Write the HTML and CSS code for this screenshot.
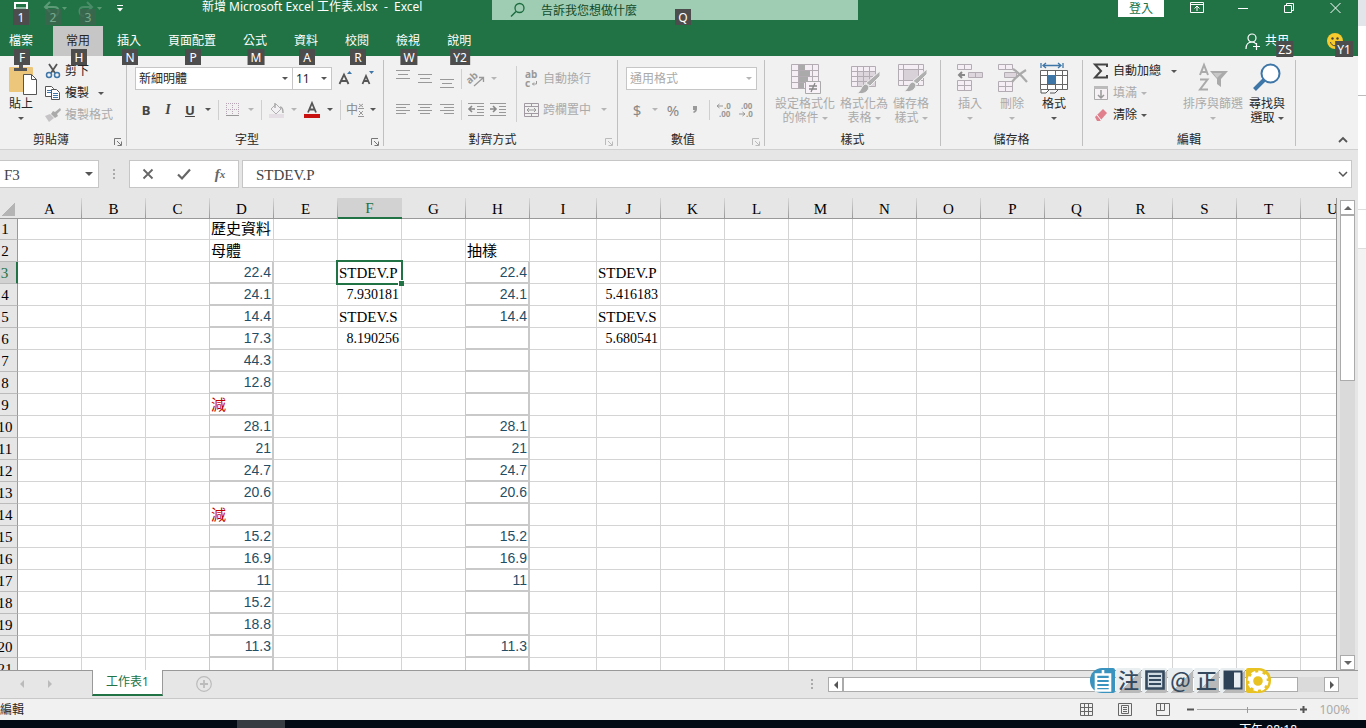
FILE: index.html
```html
<!DOCTYPE html>
<html lang="zh-Hant">
<head>
<meta charset="utf-8">
<title>新增 Microsoft Excel 工作表.xlsx - Excel</title>
<link rel="stylesheet" href="styles.css">
</head>
<body>
<div class="desktop">
<div class="app">
  <header class="titlebar">
    <div class="qat">
      <button class="qat-btn save" aria-label="儲存"><svg width="14" height="8"><path d="M1 8V1h12v7" fill="none" stroke="#fff" stroke-width="2"/><path d="M1 6h12" stroke="#fff"/></svg><span class="tip">1</span></button>
      <button class="qat-btn dim" aria-label="復原"><svg width="24" height="18"><path d="M2 7h9c6 0 6 8 0 9M7 2L2 7l5 5" fill="none" stroke="#5d9b77" stroke-width="2"/><path d="M19 7h5l-2.500 3z" fill="#5d9b77"/></svg><span class="tip">2</span></button>
      <button class="qat-btn dim" aria-label="重做"><svg width="24" height="18"><path d="M14 7H6c-6 0-6 8 0 9M9 2l5 5-5 5" fill="none" stroke="#4a8c67" stroke-width="2"/><path d="M19 7h5l-2.500 3z" fill="#5d9b77"/></svg><span class="tip">3</span></button>
      <button class="qat-more" aria-label="自訂快速存取工具列"><svg width="6" height="7"><path d="M0 .5h6" stroke="#fff"/><path d="M0 3h6L3 6.500z" fill="#fff"/></svg></button>
    </div>
    <div class="doc-title">新增 Microsoft Excel 工作表.xlsx&nbsp; -&nbsp; Excel</div>
    <label class="search"><svg width="16" height="16"><circle cx="9.500" cy="6" r="4.500" fill="none" stroke="#1c6b3f" stroke-width="1.300"/><path d="M6 9.500L1 14.500" stroke="#1c6b3f" stroke-width="1.500"/></svg><input type="text" placeholder="告訴我您想做什麼" aria-label="告訴我您想做什麼"><span class="tip">Q</span></label>
    <div class="spacer"></div>
    <button class="signin">登入</button>
    <button class="win" aria-label="功能區顯示選項"><svg width="14" height="12"><path d="M.5.500h13v10H.5zM.5 2.500h13M7 9V4M4.500 6.500L7 4l2.500 2.500" fill="none" stroke="#fff"/></svg></button>
    <button class="win" aria-label="最小化"><svg width="10" height="12"><path d="M0 6.500h10" stroke="#fff"/></svg></button>
    <button class="win" aria-label="還原"><svg width="10" height="12"><path d="M.5 3.500h7v7h-7zM2.500 3V1.500h7v7H8" fill="none" stroke="#fff"/></svg></button>
    <button class="win" aria-label="關閉"><svg width="11" height="12"><path d="M.5 1l10 10M10.500 1l-10 10" stroke="#fff"/></svg></button>
  </header>

  <nav class="tabs">
    <button class="tab file">檔案<span class="tip">F</span></button>
    <button class="tab active">常用<span class="tip">H</span></button>
    <button class="tab">插入<span class="tip">N</span></button>
    <button class="tab">頁面配置<span class="tip">P</span></button>
    <button class="tab">公式<span class="tip">M</span></button>
    <button class="tab">資料<span class="tip">A</span></button>
    <button class="tab">校閱<span class="tip">R</span></button>
    <button class="tab">檢視<span class="tip">W</span></button>
    <button class="tab">說明<span class="tip">Y2</span></button>
    <div class="spacer"></div>
    <button class="share"><svg width="16" height="17"><circle cx="7" cy="5" r="4" fill="none" stroke="#fff" stroke-width="1.200"/><path d="M1 16c0-4 2-7 6-7 1.500 0 3 .5 4 2M8 13.500h7M11.500 10v7" fill="none" stroke="#fff" stroke-width="1.200"/></svg>共用<span class="tip">ZS</span></button>
    <button class="smile" aria-label="意見反應"><svg width="16" height="16"><circle cx="8" cy="8" r="8" fill="#f7cb2d"/><circle cx="5.500" cy="5.500" r="1.200" fill="#444"/><circle cx="10.500" cy="5.500" r="1.200" fill="#444"/><path d="M3.500 9c1 5 8 5 9 0" fill="none" stroke="#444"/></svg><span class="tip">Y1</span></button>
  </nav>

  <div class="ribbon">
    <section class="group g-clip">
      <div class="body">
        <button class="big paste"><svg width="26" height="34"><path d="M1 5a1 1 0 0 1 1-1h22a1 1 0 0 1 1 1v23a1 1 0 0 1-1 1H2a1 1 0 0 1-1-1z" fill="#ecc77b"/><path d="M6 5h5V1h4v4h4v3H6z" fill="#555"/><path d="M15.500 11.500h8l5 5v15h-13z" fill="#fff" stroke="#555"/><path d="M23.500 11.500v5h5" fill="none" stroke="#555"/></svg><span>貼上</span><i class="ar"></i></button>
        <div class="stack">
          <button class="row"><svg width="16" height="16"><path d="M4 1l6 9M12 1L6 10" stroke="#555" stroke-width="1.800"/><circle cx="4" cy="12" r="2.500" fill="none" stroke="#3e76a8" stroke-width="1.500"/><circle cx="12" cy="12" r="2.500" fill="none" stroke="#3e76a8" stroke-width="1.500"/></svg><span>剪下</span></button>
          <button class="row"><svg width="16" height="16"><path d="M.5 1.500h6l2 2v8h-8z" fill="#fff" stroke="#555"/><path d="M2 5.500h4M2 7.500h4" stroke="#3e76a8"/><path d="M6.500 4.500h5l3 3v7h-8z" fill="#fff" stroke="#555"/><path d="M8 8.500h5M8 10.500h5M8 12.500h5" stroke="#3e76a8"/></svg><span>複製</span><i class="ar"></i></button>
          <button class="row off" disabled><svg width="16" height="16"><path d="M15 1l-5 4-2-1-2 3 4 4 3-2-1-2 4-4z" fill="#aaa"/><path d="M5 7L0 9l4 6 5-4z" fill="#c6c3c6"/></svg><span>複製格式</span></button>
        </div>
      </div>
      <div class="label">剪貼簿</div><button class="launch" aria-label="剪貼簿設定"><svg width="8" height="8"><path d="M.5 7V.5H7M3 3l4 4M7.500 3.500v4h-4" fill="none" stroke="currentColor"/></svg></button>
    </section>

    <section class="group g-font">
      <div class="body rows">
        <div class="line">
          <span class="combo name"><select aria-label="字型"><option>新細明體</option></select><i class="ar"></i></span><span class="combo size"><select aria-label="字型大小"><option>11</option></select><i class="ar"></i></span>
          <button class="ib grow" aria-label="放大字型"><svg width="16" height="18"><path d="M1.500 14L6 4.500 10.500 14M3 11h6" fill="none" stroke="#555" stroke-width="1.800"/><path d="M9 4h5l-2.500-3z" fill="#3e76a8"/></svg></button><button class="ib" aria-label="縮小字型"><svg width="16" height="18"><path d="M2.500 14L6 6 9.500 14M4 11h4" fill="none" stroke="#555" stroke-width="1.800"/><path d="M9 1h5l-2.500 3z" fill="#3e76a8"/></svg></button>
        </div>
        <div class="line">
          <button class="ib b">B</button><button class="ib it">I</button><button class="ib u">U</button><button class="ab" aria-label="底線樣式"><i class="ar"></i></button><i class="sep"></i>
          <button class="ib" aria-label="框線"><svg width="14" height="14"><path d="M.5 0v13M6.500 0v13M12.500 0v13M0 .5h13M0 6.500h13" stroke="#b6a6b6" stroke-dasharray="1 1"/><path d="M0 12.500h13" stroke="#999"/></svg></button><button class="ab off" disabled aria-label="框線選項"><i class="ar"></i></button><i class="sep"></i>
          <button class="ib" aria-label="填滿色彩"><svg width="17" height="16"><path d="M3 7l5-5 5 5-5 5z" fill="#f3f1f3" stroke="#b2b0b2"/><path d="M7 1v5M12 5c3 0 3 3 3 6" fill="none" stroke="#aaa" stroke-width="1.500"/><path d="M1 12h15v4H1z" fill="#e5dfe5"/></svg></button><button class="ab off" disabled aria-label="填滿色彩選項"><i class="ar"></i></button>
          <button class="ib" aria-label="字型色彩"><svg width="16" height="16"><path d="M4 10.500L8 1l4 9.500M5.500 7.500h5" fill="none" stroke="#555" stroke-width="1.800"/><path d="M0 12h16v4H0z" fill="#c9110f"/></svg></button><button class="ab" aria-label="字型色彩選項"><i class="ar"></i></button><i class="sep"></i>
          <button class="ib zh" aria-label="注音標示">中<svg width="6" height="14"><path d="M1 1l4 3M5 1L1 4M0 5.500h6M1 8l4 4M5 8l-4 4M0 13.500h6" fill="none" stroke="#999"/></svg></button><button class="ab" aria-label="注音選項"><i class="ar"></i></button>
        </div>
      </div>
      <div class="label">字型</div><button class="launch" aria-label="字型設定"><svg width="8" height="8"><path d="M.5 7V.5H7M3 3l4 4M7.500 3.500v4h-4" fill="none" stroke="currentColor"/></svg></button>
    </section>

    <section class="group g-align">
      <div class="body">
        <div class="rows off">
          <div class="line">
            <button class="ib" disabled aria-label="靠上對齊"><svg width="14" height="18"><path d="M0 .5h14M2 4.500h10M0 8.500h14" stroke="#999"/></svg></button><button class="ib" disabled aria-label="置中對齊"><svg width="14" height="18"><path d="M0 4.500h14M2 8.500h10M0 12.500h14" stroke="#999"/></svg></button><button class="ib" disabled aria-label="靠下對齊"><svg width="14" height="18"><path d="M0 9.500h14M2 13.500h10M0 17.500h14" stroke="#999"/></svg></button><i class="sep"></i>
            <button class="ib" disabled aria-label="方向"><svg width="16" height="16"><text x="-1" y="9" class="svg-ab" transform="rotate(-42 6 8)">ab</text><path d="M6 15l9-8M11 6.500h4.500V11" fill="none" stroke="#999" stroke-width="1.300"/></svg></button><button class="ab" disabled aria-label="方向選項"><i class="ar"></i></button>
          </div>
          <div class="line">
            <button class="ib" disabled aria-label="靠左"><svg width="14" height="14"><path d="M0 1.500h14M0 4.500h10M0 7.500h14M0 10.500h10" stroke="#999"/></svg></button><button class="ib" disabled aria-label="置中"><svg width="14" height="14"><path d="M0 1.500h14M2 4.500h10M0 7.500h14M2 10.500h10" stroke="#999"/></svg></button><button class="ib" disabled aria-label="靠右"><svg width="14" height="14"><path d="M0 1.500h14M4 4.500h10M0 7.500h14M4 10.500h10" stroke="#999"/></svg></button><i class="sep"></i>
            <button class="ib" disabled aria-label="減少縮排"><svg width="16" height="14"><path d="M0 .5h16M9 3.500h7M9 6.500h7M9 9.500h7M0 12.500h16" stroke="#999"/><path d="M7 6H1M4 3L1 6l3 3" fill="none" stroke="#888" stroke-width="1.600"/></svg></button><button class="ib" disabled aria-label="增加縮排"><svg width="16" height="14"><path d="M0 .5h16M9 3.500h7M9 6.500h7M9 9.500h7M0 12.500h16" stroke="#999"/><path d="M0 6h6M3 3l3 3-3 3" fill="none" stroke="#888" stroke-width="1.600"/></svg></button>
          </div>
        </div>
        <div class="rows wrapcol off">
          <div class="line"><button class="wide" disabled><svg width="14" height="18"><text x="0" y="8" class="svg-ab">ab</text><text x="0" y="17" class="svg-ab">c</text><path d="M11.500 11v3h-4M9 12.500l-1.500 1.500 1.500 1.500" fill="none" stroke="#999"/></svg>自動換行</button></div>
          <div class="line"><button class="wide" disabled><svg width="14" height="16"><path d="M-.5 1.500h14v13h-14zM-.5 4.500h14M-.5 11.500h14M6.500 1.500v3M6.500 11.500v3" fill="none" stroke="#a29aa2"/><path d="M2 8h9M4 6L2 8l2 2M9 6l2 2-2 2" fill="none" stroke="#999"/></svg>跨欄置中<i class="ar"></i></button></div>
        </div>
      </div>
      <div class="label">對齊方式</div><button class="launch off" disabled aria-label="對齊設定"><svg width="8" height="8"><path d="M.5 7V.5H7M3 3l4 4M7.500 3.500v4h-4" fill="none" stroke="currentColor"/></svg></button>
    </section>

    <section class="group g-num">
      <div class="body rows off">
        <div class="line"><span class="combo fmt"><select disabled aria-label="數值格式"><option>通用格式</option></select><i class="ar"></i></span></div>
        <div class="line">
          <button class="ib sym" disabled>$</button><button class="ab" disabled aria-label="貨幣選項"><i class="ar"></i></button><button class="ib sym" disabled>%</button><button class="ib sym" disabled aria-label="千分位樣式"><svg width="6" height="12"><path d="M1 2h4v3c0 2-1 3-3 4l-1-1 2-2H1z" fill="#999"/></svg></button><i class="sep"></i>
          <button class="ib" disabled aria-label="增加小數位數"><svg width="16" height="16"><text x="8" y="7" class="svg-dec">.0</text><text x="3" y="15" class="svg-dec">.00</text><path d="M1 4h6M3.500 2L1 4l2.500 2" fill="none" stroke="#999"/></svg></button><button class="ib" disabled aria-label="減少小數位數"><svg width="16" height="16"><text x="3" y="7" class="svg-dec">.00</text><text x="8" y="15" class="svg-dec">.0</text><path d="M1 12h6M4.500 10L7 12l-2.500 2" fill="none" stroke="#999"/></svg></button>
        </div>
      </div>
      <div class="label">數值</div><button class="launch off" disabled aria-label="數值設定"><svg width="8" height="8"><path d="M.5 7V.5H7M3 3l4 4M7.500 3.500v4h-4" fill="none" stroke="currentColor"/></svg></button>
    </section>

    <section class="group g-style">
      <div class="body off">
        <button class="big" disabled><svg width="32" height="32"><path d="M2.500 1.500h27v24h-27zM2.500 7.500h27M2.500 13.500h27M2.500 19.500h27M9.500 1.500v24M23.500 1.500v24" fill="#f5eff5" stroke="#b3adb3"/><path d="M10 2h6v5h-6zM10 8h11v5H10zM10 14h9v5h-9zM10 20h5v5h-5z" fill="#aaa"/><path d="M16.500 18.500h15v12h-15z" fill="#f8f2f8" stroke="#aaa"/><path d="M20 23h8M20 26h8M26 20l-4 9" stroke="#888" stroke-width="1.300"/></svg><span>設定格式化<br>的條件<i class="ar"></i></span></button>
        <button class="big" disabled><svg width="32" height="32"><path d="M3.500 3.500h24v20h-24z" fill="#f5eff5"/><path d="M10 9h17v14H10z" fill="#ddd6dd"/><path d="M3.500 3.500h24v20h-24zM3.500 8.500h24M3.500 13.500h24M3.500 18.500h24M9.500 3.500v20M15.500 3.500v20M21.500 3.500v20" fill="none" stroke="#b3adb3"/><path d="M32 8v5l-10 10-4-3z" fill="#b0b0b0" stroke="#f1f1f1"/><path d="M17 21c3 0 5 3 3 6-3 4-7 4-11 3 4-1 4-7 8-9z" fill="#aaa" stroke="#f1f1f1"/></svg><span>格式化為<br>表格<i class="ar"></i></span></button>
        <button class="big" disabled><svg width="32" height="32"><path d="M3.500 1.500h25v21h-25z" fill="#f5eff5"/><path d="M9 7h14v10H9z" fill="#d8d2d8"/><path d="M3.500 1.500h25v21h-25zM3.500 6.500h25M3.500 17.500h25M8.500 1.500v21M23.500 1.500v21" fill="none" stroke="#b3adb3"/><path d="M32 6v5l-10 10-4-3z" fill="#b0b0b0" stroke="#f1f1f1"/><path d="M17 19c3 0 5 3 3 6-3 4-7 4-11 3 4-1 4-7 8-9z" fill="#aaa" stroke="#f1f1f1"/></svg><span>儲存格<br>樣式<i class="ar"></i></span></button>
      </div>
      <div class="label">樣式</div>
    </section>

    <section class="group g-cells">
      <div class="body">
        <button class="big off" disabled><svg width="32" height="32"><path d="M3.500 1.500h14v5h-14zM10.500 1.500v5M3.500 17.500h14v10h-14zM3.500 22.500h14M10.500 17.500v10" fill="#f5eff5" stroke="#b3adb3"/><path d="M14.500 9.500h14v5h-14zM21.500 9.500v5" fill="#ddd6dd" stroke="#b3adb3"/><path d="M11 12H5M8 9l-3 3 3 3" fill="none" stroke="#888" stroke-width="2"/></svg><span>插入</span><i class="ar"></i></button>
        <button class="big off" disabled><svg width="32" height="32"><path d="M2.500 1.500h14v5h-14zM9.500 1.500v5M2.500 18.500h14v10h-14zM2.500 23.500h14M9.500 18.500v10" fill="#f5eff5" stroke="#b3adb3"/><path d="M8.500 9.500h12v5h-12z" fill="#ddd6dd" stroke="#b3adb3"/><path d="M17 6c5 3 10 8 14 13M30 7c-5 3-10 7-14 12" fill="none" stroke="#aaa" stroke-width="2.200"/></svg><span>刪除</span><i class="ar"></i></button>
        <button class="big"><svg width="32" height="32"><path d="M3 0v5M25 0v5M5 2.500h18M8 0L5 2.500 8 5M20 0l3 2.500L20 5" fill="none" stroke="#3e76a8" stroke-width="1.300"/><path d="M2.500 7.500h27v19h-27zM2.500 12.500h27M2.500 21.500h27M9.500 7.500v19M17.500 7.500v19M24.500 7.500v19" fill="#fff" stroke="#666"/><path d="M10 12h8v9h-8z" fill="#3e76a8"/><path d="M3 27v3h5l3-3M12 30h5l3-3" fill="#fff" stroke="#555"/></svg><span>格式</span><i class="ar"></i></button>
      </div>
      <div class="label">儲存格</div>
    </section>

    <section class="group g-edit">
      <div class="body">
        <div class="stack">
          <button class="row"><svg width="16" height="16"><path d="M14 4V1.500H2L8 8l-6 6.500h12V12" fill="none" stroke="#444" stroke-width="2"/></svg><span class="first">自動加總</span><i class="ar"></i></button>
          <button class="row off" disabled><svg width="16" height="16"><path d="M1.500 1.500h13v13h-13z" fill="#f5f1f5" stroke="#aaa"/><path d="M1 1h14v3H1z" fill="#bbb"/><path d="M8 5v8M5 10l3 3 3-3" fill="none" stroke="#999" stroke-width="1.500"/></svg><span>填滿</span><i class="ar"></i></button>
          <button class="row"><svg width="16" height="16"><path d="M2 10l8-8 4 4-7 8H4z" fill="#e0808c"/><path d="M4 8l4 5" stroke="#fff"/></svg><span>清除</span><i class="ar"></i></button>
        </div>
        <button class="big off sort" disabled><svg width="32" height="32"><path d="M3 12l4-10 4 10M4.500 9h5M3 16.500h7.500L3 26.500h8" fill="none" stroke="#aaa" stroke-width="2"/><path d="M13 8h18l-7 8v8l-4-3v-5z" fill="#aaa"/><path d="M16 10h9l-5 5z" fill="#c8c8c8"/></svg><span>排序與篩選</span><i class="ar"></i></button>
        <button class="big find"><svg width="32" height="32"><circle cx="19.500" cy="10.500" r="9" fill="#fff" stroke="#3e76a8" stroke-width="2"/><path d="M13 17L3.500 26.500" stroke="#3e76a8" stroke-width="4"/></svg><span>尋找與<br>選取<i class="ar"></i></span></button>
      </div>
      <div class="label">編輯</div>
    </section>
    <div class="spacer"></div>
    <button class="collapse" aria-label="摺疊功能區"><svg width="10" height="7"><path d="M1 6l4-4 4 4" fill="none" stroke="#555" stroke-width="1.800"/></svg></button>
  </div>

  <div class="fbar">
    <div class="namebox"><input type="text" value="F3" aria-label="名稱方塊"><i class="ar"></i></div>
    <i class="dots"></i>
    <div class="fbtns">
      <button aria-label="取消"><svg width="12" height="12"><path d="M1.500 1.500l9 9M10.500 1.500l-9 9" stroke="#666" stroke-width="1.800"/></svg></button>
      <button aria-label="輸入"><svg width="14" height="12"><path d="M1 6.500l4 4L13 1.500" fill="none" stroke="#666" stroke-width="2.200"/></svg></button>
      <button class="fx" aria-label="插入函數">f<sub>x</sub></button>
    </div>
    <div class="formula"><input type="text" value="STDEV.P" aria-label="資料編輯列"><svg width="8" height="6"><path d="M0 1l4 4 4-4" fill="none" stroke="#555" stroke-width="1.500"/></svg></div>
  </div>

  <main class="work">
    <div class="sheet">
      <table>
        <colgroup><col class="c-head"><col><col><col><col><col><col><col><col><col class="c-i"><col><col><col><col><col><col><col><col><col><col><col><col></colgroup>
        <thead><tr><th class="corner"></th><th>A</th><th>B</th><th>C</th><th>D</th><th>E</th><th class="on">F</th><th>G</th><th>H</th><th>I</th><th>J</th><th>K</th><th>L</th><th>M</th><th>N</th><th>O</th><th>P</th><th>Q</th><th>R</th><th>S</th><th>T</th><th>U</th></tr></thead>
        <tbody>
        <tr class="r1"><th>1<td><td><td><td>歷史資料<td><td><td><td><td><td><td><td><td><td><td><td><td><td><td><td><td>
        <tr><th>2<td><td><td><td>母體<td><td><td><td>抽樣<td><td><td><td><td><td><td><td><td><td><td><td><td>
        <tr><th class="on">3<td><td><td><td class="m">22.4<td><td class="cur">STDEV.P<td><td class="m">22.4<td><td>STDEV.P<td><td><td><td><td><td><td><td><td><td><td>
        <tr><th>4<td><td><td><td class="m">24.1<td><td class="n">7.930181<td><td class="m">24.1<td><td class="n">5.416183<td><td><td><td><td><td><td><td><td><td><td>
        <tr><th>5<td><td><td><td class="m">14.4<td><td>STDEV.S<td><td class="m">14.4<td><td>STDEV.S<td><td><td><td><td><td><td><td><td><td><td>
        <tr><th>6<td><td><td><td class="m">17.3<td><td class="n">8.190256<td><td class="m"><td><td class="n">5.680541<td><td><td><td><td><td><td><td><td><td><td>
        <tr><th>7<td><td><td><td class="m">44.3<td><td><td><td class="m"><td><td><td><td><td><td><td><td><td><td><td><td><td>
        <tr><th>8<td><td><td><td class="m">12.8<td><td><td><td class="m"><td><td><td><td><td><td><td><td><td><td><td><td><td>
        <tr><th>9<td><td><td><td class="m minus">減<td><td><td><td class="m"><td><td><td><td><td><td><td><td><td><td><td><td><td>
        <tr><th>10<td><td><td><td class="m">28.1<td><td><td><td class="m">28.1<td><td><td><td><td><td><td><td><td><td><td><td><td>
        <tr><th>11<td><td><td><td class="m">21<td><td><td><td class="m">21<td><td><td><td><td><td><td><td><td><td><td><td><td>
        <tr><th>12<td><td><td><td class="m">24.7<td><td><td><td class="m">24.7<td><td><td><td><td><td><td><td><td><td><td><td><td>
        <tr><th>13<td><td><td><td class="m">20.6<td><td><td><td class="m">20.6<td><td><td><td><td><td><td><td><td><td><td><td><td>
        <tr><th>14<td><td><td><td class="m minus">減<td><td><td><td class="m"><td><td><td><td><td><td><td><td><td><td><td><td><td>
        <tr><th>15<td><td><td><td class="m">15.2<td><td><td><td class="m">15.2<td><td><td><td><td><td><td><td><td><td><td><td><td>
        <tr><th>16<td><td><td><td class="m">16.9<td><td><td><td class="m">16.9<td><td><td><td><td><td><td><td><td><td><td><td><td>
        <tr><th>17<td><td><td><td class="m">11<td><td><td><td class="m">11<td><td><td><td><td><td><td><td><td><td><td><td><td>
        <tr><th>18<td><td><td><td class="m">15.2<td><td><td><td class="m"><td><td><td><td><td><td><td><td><td><td><td><td><td>
        <tr><th>19<td><td><td><td class="m">18.8<td><td><td><td class="m"><td><td><td><td><td><td><td><td><td><td><td><td><td>
        <tr><th>20<td><td><td><td class="m">11.3<td><td><td><td class="m">11.3<td><td><td><td><td><td><td><td><td><td><td><td><td>
        <tr><th>21<td><td><td><td class="m"><td><td><td><td class="m"><td><td><td><td><td><td><td><td><td><td><td><td><td>
        </tbody>
      </table>
    </div>
    <div class="vscroll">
      <button aria-label="向上捲動"><i class="ar up"></i></button>
      <div class="vthumb"></div>
      <div class="spacer"></div>
      <button aria-label="向下捲動"><i class="ar down"></i></button>
    </div>
  </main>

  <div class="sheetbar">
    <button class="nav" aria-label="上一張"><i class="ar left"></i></button><button class="nav" aria-label="下一張"><i class="ar right"></i></button>
    <button class="sheet-tab">工作表1</button>
    <button class="add" aria-label="新工作表"><svg width="16" height="16"><circle cx="8" cy="8" r="7.300" fill="none" stroke="#bbb" stroke-width="1.200"/><path d="M8 4v8M4 8h8" stroke="#bbb" stroke-width="1.800"/></svg></button>
    <div class="spacer"></div>
    <i class="dots"></i>
    <div class="hscroll">
      <button aria-label="向左捲動"><i class="ar left"></i></button>
      <div class="hthumb"></div>
      <div class="htrack"></div>
      <button aria-label="向右捲動"><i class="ar right"></i></button>
    </div>
  </div>

  <footer class="status">
    <span>編輯</span>
    <div class="spacer"></div>
    <button aria-label="標準"><svg width="14" height="13"><path d="M.5.500h12v12H.5zM.5 4.500h12M.5 8.500h12M4.500.500v12M8.500.500v12" fill="none" stroke="#666"/></svg></button>
    <button aria-label="整頁模式"><svg width="14" height="13"><path d="M.5.500h13v12H.5zM3.500 2.500h7v8h-7zM5 4.500h4M5 6.500h4M5 8.500h4" fill="none" stroke="#666"/></svg></button>
    <button aria-label="分頁預覽"><svg width="14" height="13"><path d="M.5.500h13v12H.5zM.5 7.500h8v-7M4.500.500v7" fill="none" stroke="#666"/></svg></button>
    <button class="zm" aria-label="縮小"><svg width="7" height="7"><path d="M0 3.500h7" stroke="#555" stroke-width="2"/></svg></button>
    <input type="range" min="0" max="100" value="50" aria-label="縮放">
    <button class="zm" aria-label="放大"><svg width="7" height="7"><path d="M0 3.500h7M3.500 0v7" stroke="#555" stroke-width="2"/></svg></button>
    <span class="pct">100%</span>
  </footer>
</div>
<aside class="behind"><div class="b1"></div><div class="b2"></div><div class="b3"></div><div class="b4"></div><div class="b5"></div></aside>
</div>
<div class="taskbar"><i class="task"></i><span class="clock">下午 08:18</span></div>

<div class="ime">
  <button class="blue" aria-label="輸入法"><svg width="20" height="24"><path d="M3 5.500h14v16H3zM10 5V1" fill="none" stroke="#fff" stroke-width="2.600"/><path d="M3 10h14M3 14h14M3 18h14" stroke="#fff" stroke-width="2"/></svg></button>
  <button>注</button>
  <button aria-label="鍵盤"><svg width="20" height="22"><path d="M1.500 3.500h17v17h-17z" fill="#cfd9e2" stroke="#34495e" stroke-width="2.600"/><path d="M4 8h12M4 12h12M4 16h12" stroke="#34495e" stroke-width="2"/></svg></button>
  <button>@</button>
  <button>正</button>
  <button aria-label="半形"><svg width="20" height="22"><path d="M1.500 3.500h17v17h-17z" fill="#e8eef2" stroke="#34495e" stroke-width="2"/><path d="M1 3h10v18H1z" fill="#2d4257"/></svg></button>
  <button class="gear" aria-label="設定"><svg width="24" height="24"><circle cx="11" cy="12" r="6.800" fill="none" stroke="#fff" stroke-width="4"/><circle cx="11" cy="12" r="9" fill="none" stroke="#fff" stroke-width="3" stroke-dasharray="4.200 2.870"/></svg></button>
</div>
</body>
</html>
```
FILE: styles.css
```css
* { box-sizing: border-box; }
body {
  margin: 0;
  height: 100vh;
  display: flex;
  flex-direction: column;
  overflow: hidden;
  font: 12px/14px "Noto Sans", "Noto Sans CJK TC", sans-serif;
  color: #262626;
}
button, input, select { font: inherit; color: inherit; border: 0; padding: 0; margin: 0; background: none; border-radius: 0; outline: 0; }
button { display: flex; align-items: center; justify-content: center; white-space: nowrap; flex: none; }
svg { display: block; flex: none; overflow: visible; }
.spacer { flex: 1; }
.desktop { flex: 1; display: flex; min-height: 0; }
.app { flex: 1; min-width: 0; display: flex; flex-direction: column; background: #e6e6e6; }

.ar { display: inline-block; flex: none; border: 3px solid transparent; border-top-color: #555; border-bottom: 0; }
.ar.up { border: 4px solid transparent; border-top: 0; border-bottom-color: #666; }
.ar.down { border: 4px solid transparent; border-bottom: 0; border-top-color: #666; }
.ar.left { border: 4px solid transparent; border-right-color: #555; border-left: 0; }
.ar.right { border: 4px solid transparent; border-left-color: #555; border-right: 0; }
.off { color: #aaa; }
.off .ar { border-top-color: #b5b5b5; }
.tip {
  position: absolute; z-index: 5; left: 50%; top: 23px; margin-left: 1px; transform: translateX(-50%);
  min-width: 16px; height: 16px; padding: 0 3px; background: #4d4d4d; color: #fff;
  font-size: 12px; line-height: 17px; text-align: center;
}

/* title bar */
.titlebar { display: flex; align-items: flex-start; height: 26px; background: #217346; color: #fff; }
.qat { display: flex; width: 202px; padding-left: 14px; }
.qat-btn { position: relative; align-items: flex-start; justify-content: flex-start; width: 35px; height: 24px; }
.qat-btn.save { width: 29px; padding-top: 2px; }
.qat-btn .tip { top: 9px; left: 6px; }
.qat-btn.dim .tip { left: 9px; background: #3d6650; color: #8db59d; opacity: .8; }
.qat-more { height: 16px; margin-left: 4px; }
.doc-title { width: 290px; line-height: 14px; white-space: nowrap; }
.search { position: relative; display: flex; align-items: center; gap: 15px; flex: 0 1 366px; height: 20px; padding-left: 18px; background: #9fcdb3; color: #0f4a2a; }
.search input { width: 130px; height: 16px; }
.search input::placeholder { color: #0f4a2a; opacity: 1; }
.search .tip { left: 190px; top: 9px; }
.signin { width: 46px; height: 17px; margin-right: 10px; background: #fff; color: #217346; }
.win { width: 46px; height: 15px; }

/* tabs */
.tabs { display: flex; gap: 1px; height: 30px; background: #217346; color: #fff; }
.tab { position: relative; height: 30px; padding: 0 13px; }
.tab.file { padding: 0 9px; margin-right: 10px; }
.tab.active { background: #c6c6c6; color: #262626; }
.share { position: relative; gap: 4px; width: 46px; margin-right: 35px; }
.share .tip { left: 40px; top: 15px; padding: 0 2px; }
.smile { position: relative; width: 18px; margin-right: 14px; }
.smile .tip { left: 17px; top: 15px; padding: 0 2px; }

/* ribbon */
.ribbon { display: flex; padding: 4px 0 3px; background: #f1f1f1; border-bottom: 1px solid #d0d0d0; }
.group { position: relative; flex: none; height: 86px; border-right: 1px solid #c0c0c0; display: flex; flex-direction: column; }
.body { flex: 1; display: flex; }
.label { height: 13px; line-height: 13px; text-align: center; padding-right: 24px; }
.launch { position: absolute; right: 4px; bottom: 0; color: #777; }
.launch.off { color: #bbb; }
.rows { display: flex; flex-direction: column; gap: 8px; padding-top: 7px; }
.line { display: flex; align-items: center; height: 23px; }
.big { flex-direction: column; justify-content: flex-start; padding-top: 3px; height: 70px; line-height: 14px; }
.big svg { margin-bottom: 2px; }
.big > .ar { margin-top: 6px; }
.big span .ar { margin: 0 0 2px 3px; }
.stack { display: flex; flex-direction: column; }
.row { height: 22px; justify-content: flex-start; gap: 4px; }
.row .ar { margin-left: 4px; }
.ib { width: 22px; height: 22px; }
.ab { width: 14px; height: 22px; }
.sep { width: 1px; height: 20px; margin: 0 3px; background: #cfcfcf; }

.g-clip { width: 127px; }
.paste { width: 34px; padding-left: 8px; margin-right: 11px; }
.paste svg { height: 32px; }
.g-clip .row .ar { margin-left: 5px; }

.g-font { width: 257px; }
.g-font .rows, .g-num .rows { padding-left: 8px; }
.g-font .label { padding-right: 16px; }
.combo { display: flex; align-items: center; height: 23px; background: #fff; border: 1px solid #c6c6c6; padding-right: 4px; }
.combo select { appearance: none; flex: 1; min-width: 0; padding-left: 3px; opacity: 1; }
.combo.name { width: 158px; }
.combo.size { width: 40px; margin-left: -1px; }
.combo.fmt { width: 131px; }
.grow { margin-left: 3px; }
.b { font-weight: 700; font-size: 13px; color: #444; }
.it { font: italic 700 14px "Liberation Serif", serif; color: #444; }
.u { font-weight: 700; font-size: 13px; color: #444; text-decoration: underline; }
.zh { color: #888; }

.g-align { width: 234px; }
.g-align .rows { padding-left: 8px; }
.g-align .wrapcol { margin: 6px 0 0 7px; padding: 1px 0 0 8px; border-left: 1px solid #cfcfcf; height: 56px; }
.wide { gap: 4px; }
.wide .ar { margin-left: 6px; }
.g-align .label { padding-right: 16px; }
.svg-ab { font: 700 10px "Noto Sans", sans-serif; fill: #999; }
.svg-dec { font: 700 8px "Noto Sans", sans-serif; fill: #999; }

.g-num { width: 147px; }
.g-num .label { padding-right: 16px; }
.sym { font-size: 15px; color: #888; }

.g-style { width: 176px; }
.g-style .body { padding-left: 10px; gap: 5px; }
.g-style .label, .g-cells .label { padding-right: 0; }
.g-cells { width: 142px; }
.g-cells .body { padding-left: 12px; gap: 8px; }
.g-cells .big { width: 34px; }
.g-edit { width: 213px; }
.g-edit .body { padding-left: 10px; }
.g-edit .label { padding-right: 0; }
.g-edit .row .ar { margin: 0; }
.g-edit .first { margin-right: 6px; }
.sort { margin-left: 6px; }
.find { margin-left: 6px; }
.collapse { align-self: flex-end; width: 30px; height: 14px; }

/* formula bar */
.fbar { display: flex; align-items: center; height: 48px; padding-right: 6px; color: #444; font: 15px/18px "Liberation Serif", "Noto Sans CJK TC", serif; }
.fbar input { flex: 1; min-width: 0; height: 24px; padding-top: 2px; }
.namebox, .fbtns, .formula { display: flex; align-items: center; height: 28px; background: #fff; border: 1px solid #c6c6c6; }
.namebox { width: 99px; border-left: 0; padding: 0 5px 0 4px; }
.namebox .ar { border-width: 4px 4px 0; }
.dots { width: 2px; height: 11px; margin: 0 14px; background: repeating-linear-gradient(#aaa 0 2px, transparent 2px 4px); }
.fbtns { width: 110px; margin-right: 3px; }
.fbtns button { width: 36px; height: 26px; }
.fx { font: italic 700 15px "Liberation Serif", serif; color: #666; }
.fx sub { font-size: 11px; }
.formula { flex: 1; padding: 0 4px 0 13px; }

/* worksheet */
.work { flex: 1; min-height: 0; display: flex; padding-right: 3px; }
.sheet { flex: 1; min-width: 0; overflow: hidden; border-right: 1px solid #999; }
table { table-layout: fixed; width: 1371px; margin-left: -7px; border-collapse: separate; border-spacing: 0; color: #000; font: 15px/20px "Liberation Serif", "Noto Sans CJK TC", serif; }
col { width: 64px; }
.c-head { width: 25px; }
.c-i { width: 67px; }
th { padding: 0; font-weight: 400; background: #e6e6e6; text-align: center; }
thead th { height: 21px; padding: 2px 1px 0 0; line-height: 18px; border-bottom: 1px solid #999; background: linear-gradient(#d8d8d8, #999) right / 1px 100% no-repeat #e6e6e6; }
thead th.on { background: #d2d2d2; color: #217346; border-bottom: 2px solid #217346; line-height: 17px; }
thead .corner { background: linear-gradient(135deg, transparent 50%, #b4b4b4 50%) 9px 5px / 13px 13px no-repeat, #e6e6e6; }
tbody th { padding-top: 1px; border-right: 1px solid #999; border-bottom: 1px solid #bbb; }
tbody th.on { background: #d2d2d2; color: #217346; border-right: 2px solid #217346; }
td { background: #fff; height: 22px; padding: 1px 2px 0 1px; border-right: 1px solid #d4d4d4; border-bottom: 1px solid #d4d4d4; white-space: nowrap; line-height: 20px; }
.r1 td, .r1 th { height: 21px; line-height: 19px; }
.n { text-align: right; font-size: 14px; }
.m { border-right: 2px solid #c9c9c9; border-bottom: 2px solid #c9c9c9; box-shadow: -1px -1px 0 #c9c9c9; text-align: right; padding-right: 1px; line-height: 19px; color: #1f4e66; font-family: "Liberation Sans", "Noto Sans CJK TC", sans-serif; font-size: 14px; }
.minus { text-align: left; color: #c00000; font-size: 15px; }
.cur { position: relative; }
.cur::before { content: ""; position: absolute; inset: -2px; border: 2px solid #217346; }
.cur::after { content: ""; position: absolute; right: -3px; bottom: -3px; width: 5px; height: 5px; background: #217346; border: solid #fff; border-width: 1px 0 0 1px; }

.vscroll { display: flex; flex-direction: column; width: 15px; margin: 2px 0 0 3px; background: #dadada; }
.vscroll button, .hscroll button { width: 15px; height: 15px; background: #fff; border: 1px solid #ababab; }
.vthumb { height: 166px; background: #fff; border: 1px solid #ababab; }

/* sheet tabs and scroll bar */
.sheetbar { display: flex; height: 28px; border-top: 1px solid #999; padding-right: 19px; }
.nav { width: 28px; height: 26px; }
.nav:first-child { margin-left: 8px; }
.nav .left { border-right-color: #bbb; }
.nav .right { border-left-color: #bbb; }
.sheet-tab { height: 26px; width: 71px; margin: -1px 0 0 28px; background: #fff; color: #217346; border: 1px solid #999; border-top: 0; border-bottom: 2px solid #217346; }
.add { margin-left: 33px; height: 26px; }
.sheetbar .dots { margin: 8px 15px 0; }
.hscroll { display: flex; width: 511px; height: 15px; margin-top: 6px; background: #dadada; }
.hthumb { flex: 1; background: #fff; border: 1px solid #ababab; }
.htrack { width: 26px; }

.status { display: flex; align-items: center; height: 22px; padding-right: 8px; background: #f1f1f1; border-top: 1px solid #c8c8c8; }
.status button { width: 14px; margin-right: 24px; }
.status .zm { width: 7px; margin: 0 3px 0 -7px; }
.status input + .zm { margin: 0 12px 0 3px; }
.status input { appearance: none; width: 100px; height: 8px; background: linear-gradient(#aaa, #aaa) center / 100% 1px no-repeat; }
.status input::-webkit-slider-thumb { appearance: none; width: 1px; height: 6px; background: #999; }
.pct { color: #aaa; }

/* window behind the right edge */
.behind { width: 8px; display: flex; flex-direction: column; background: #f3f3f3; }
.b1 { height: 26px; background: #e2e6ea; }
.b2 { height: 70px; background: #fff; border-bottom: 1px solid #bbb; }
.b3 { height: 114px; background: #fff; border-bottom: 1px solid #ddd; }
.b4 { height: 39px; background: #fff; border-bottom: 1px solid #ddd; }
.b5 { flex: 1; }

.taskbar { display: flex; height: 8px; flex: none; overflow: hidden; background: #030a14; color: #fff; }
.task { width: 48px; margin-left: 237px; background: #373b42; }
.clock { margin: 3px 69px 0 auto; }

/* floating input-method bar */
.ime { position: absolute; right: 95px; bottom: 35px; display: flex; gap: 1px; color: #34495e; font: 500 21px/24px "Noto Sans CJK TC", sans-serif; }
.ime button { width: 25px; height: 25px; padding-bottom: 3px; background: linear-gradient(135deg, #e9eef1 55%, #b9b9b9 55%); border-radius: 2px; }
.ime .blue { padding: 0; background: #3a93bf; border-radius: 12px 2px 2px 12px; }
.ime .gear { padding: 0; background: #e8c222; border-radius: 2px 12px 12px 2px; }
```
